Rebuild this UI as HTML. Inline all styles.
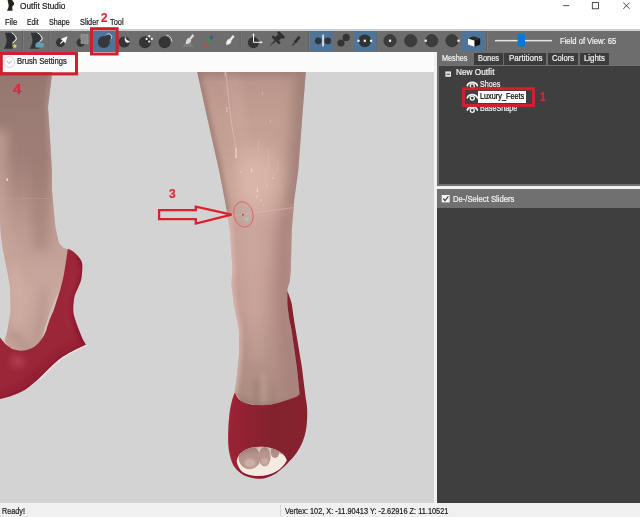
<!DOCTYPE html>
<html><head><meta charset="utf-8"><title>Outfit Studio</title>
<style>
html,body{margin:0;padding:0;}
body{width:640px;height:517px;overflow:hidden;background:#fff;position:relative;font-family:"Liberation Sans","DejaVu Sans",sans-serif;font-size:9px;color:#1c1c1c;}
.a{position:absolute;}
.t{position:absolute;white-space:nowrap;transform-origin:0 0;color:#1c1c1c;-webkit-text-stroke:0.22px currentColor;}
.t.w{color:#f2f2f2;}
.t.k{color:#000;}
.t.red{color:#e0283a;font-weight:bold;}
#toolbar{left:0;top:30.5px;width:640px;height:21.2px;background:#6d6d6d;}
#vp{left:0;top:52px;width:434px;height:451px;background:#d3d3d3;overflow:hidden;}
#brush{left:0;top:52px;width:437px;height:20px;background:#fbfbfb;}
#rp{left:437px;top:52px;width:203px;height:451px;background:#6d6d6d;}
.tab{top:52.5px;height:12.5px;background:#3c3c3c;}
#tree{left:437px;top:65px;width:203px;height:121px;background:#3f3f3f;border:2px solid #717171;box-sizing:border-box;border-right:none;border-top-width:1.5px;}
#split{left:434px;top:186px;width:206px;height:3px;background:#f2f2f2;}
#vsplit{left:434px;top:52px;width:3px;height:451px;background:#f2f2f2;}
#shdr{left:437px;top:188.8px;width:203px;height:19.5px;background:#707070;}
#sbody{left:437px;top:208.3px;width:203px;height:294.5px;background:#3f3f3f;}
#status{left:0;top:502.8px;width:640px;height:14.2px;background:#f0f0f0;}
svg{position:absolute;left:0;top:0;}
#all{position:absolute;left:0;top:0;width:640px;height:517px;overflow:hidden;filter:blur(0.35px);}
</style></head><body>
<div class="a" style="left:0;top:30.5px;width:640px;height:21.2px;background:#6d6d6d;"></div>
<div class="a" style="left:0;top:72px;width:434px;height:431px;background:#d3d3d3;"></div>
<div class="a" style="left:437px;top:52px;width:203px;height:451px;background:#6d6d6d;"></div>
<div class="a" style="left:439px;top:66.5px;width:201px;height:117.5px;background:#3f3f3f;"></div>
<div class="a" style="left:437px;top:186px;width:203px;height:3px;background:#f2f2f2;"></div>
<div class="a" style="left:437px;top:188.8px;width:203px;height:19.5px;background:#707070;"></div>
<div class="a" style="left:437px;top:208.3px;width:203px;height:294.5px;background:#3f3f3f;"></div>
<div class="a" style="left:0;top:502.8px;width:640px;height:14.2px;background:#f0f0f0;"></div>
<div id="all">
<div class="a" style="left:0;top:28.9px;width:640px;height:2px;background:#cdcdcd;"></div>
<div class="a" id="toolbar"></div>
<div class="a" id="vp"></div>
<svg width="640" height="517" viewBox="0 0 640 517">
<defs>
<clipPath id="vpclip"><rect x="0" y="72" width="434" height="430.8"/></clipPath>
<filter id="b2" filterUnits="userSpaceOnUse" x="-20" y="40" width="680" height="500"><feGaussianBlur stdDeviation="2"/></filter>
<filter id="b4" filterUnits="userSpaceOnUse" x="-20" y="40" width="680" height="500"><feGaussianBlur stdDeviation="4"/></filter>
<filter id="b6" filterUnits="userSpaceOnUse" x="-20" y="40" width="680" height="500"><feGaussianBlur stdDeviation="6"/></filter>
<filter id="b10" filterUnits="userSpaceOnUse" x="-20" y="40" width="680" height="500"><feGaussianBlur stdDeviation="10"/></filter>
<filter id="b1" filterUnits="userSpaceOnUse" x="-20" y="40" width="680" height="500"><feGaussianBlur stdDeviation="0.8"/></filter>
<filter id="soft" x="-5%" y="-5%" width="110%" height="110%"><feGaussianBlur stdDeviation="0.45"/></filter>
<path id="legC" d="M197.2 72 L305.8 72 L302 120 L298.3 170 L294.2 200 L291.8 230 L290.8 270 L289.8 281.6 L287.4 289.3 L287.3 304 L289 318 L291.5 330 L296.9 368 L300 396 L280 403 L260 406 L242 402 L234.5 393 L236.5 380 L239 355 L239 330 L234 305 L231.5 285 L232.4 268 L229.9 230 L224.8 200 L219 170 L207.7 120 Z"/>
<path id="legL" d="M-5 72 L52.3 72 L48 107 L49.4 128 L51.9 170 L51.9 189 L53.5 208 L55.5 228 L59 243 L63 247.5 L67.7 249.5 L66 268 L60 290 L53 313 L47 333 L42 342 L30 352 L12 351 L4.5 341 L7 332 L10.5 312 L10 287 L6.6 268 L3 250 L1 237 L0 220 L-5 215 Z"/>
<path id="shoeL" d="M67.7 248.7 C72 250 75 252.5 77.4 255.5 C80.5 259 82.5 262 82.3 266 C82.3 270 82 274 81.3 278.7 C79.5 286 76 291 74.5 296 C73 303 72.8 311 73.8 315 C75 320 78 328 83 340 L86.1 345 C76 349.5 68 353 60 359 C50 367 38 381 25 389.7 C17 394.4 8 397.4 -5 400 L-5 335 L0 337.4 C3 341 8 347.5 14 349.5 C20 351.8 28 350.5 34 347 C40 343 44 336 46.4 330 C48 324 50.5 317 53.2 311.6 C56 303 58.5 295 60.5 288.4 C62.5 281 64 275 64.8 269 C66 262 67 255 67.7 248.7 Z"/>
<path id="shoeC" d="M234.8 392.8 C237 398 240 401 244 402.5 C250 404.6 256 405.4 262 405.2 C268 405 274 404 280 402.4 C287 400.4 293 398.4 297.5 396.3 L299.6 394 L296.9 368 L291.5 330 L289 318 L287.3 304 L287.3 291 C289.5 296 291 301 291.8 304 L294 320 L295.7 330 L302 368 L305.7 398 C307 404 307.4 410 307.2 416 C307 424 306.4 430 304.6 436 C302 445 297 454 289.4 461.3 C284 467 280 470.6 276.6 472.9 C271 476.4 266 478.4 260.4 478.7 C254 478.6 249 477.4 244 475.2 C239.6 472.6 236.2 469.6 233.7 466 C231.6 461.6 230 456.8 229.2 452 C228.2 446 228 440 228.2 433.4 C228.4 425 229 417 230 410 C231.2 403 232.8 397 234.8 392.8 Z"/>
<clipPath id="cLegC"><use href="#legC"/></clipPath>
<clipPath id="cLegL"><use href="#legL"/></clipPath>
<clipPath id="cShoeL"><use href="#shoeL"/></clipPath>
<clipPath id="cShoeC"><use href="#shoeC"/></clipPath>
<linearGradient id="gLegC" x1="0" y1="0" x2="0" y2="1">
<stop offset="0" stop-color="#a5837a"/><stop offset="0.03" stop-color="#bb968c"/><stop offset="0.144" stop-color="#c39e92"/><stop offset="0.38" stop-color="#c6a195"/><stop offset="0.43" stop-color="#c8a299"/><stop offset="0.56" stop-color="#c7a298"/><stop offset="0.71" stop-color="#c39d93"/><stop offset="0.83" stop-color="#b6948a"/><stop offset="1" stop-color="#ab8a80"/>
</linearGradient>
<linearGradient id="gShoeC" gradientUnits="userSpaceOnUse" x1="227" y1="0" x2="307" y2="0">
<stop offset="0" stop-color="#9c2334"/><stop offset="0.3" stop-color="#8e2131"/><stop offset="0.55" stop-color="#83202e"/><stop offset="1" stop-color="#86222f"/>
</linearGradient>
<linearGradient id="gLegL" x1="0" y1="0" x2="0" y2="1">
<stop offset="0" stop-color="#94776f"/><stop offset="0.3" stop-color="#9f7f77"/><stop offset="0.44" stop-color="#ae8c84"/><stop offset="0.47" stop-color="#b4928a"/><stop offset="0.6" stop-color="#c19e95"/><stop offset="0.78" stop-color="#cba89e"/><stop offset="1" stop-color="#c6a298"/>
</linearGradient>
</defs>
<g clip-path="url(#vpclip)">
<g filter="url(#soft)">
<!-- left leg -->
<use href="#legL" fill="url(#gLegL)"/>
<g clip-path="url(#cLegL)">
 <path d="M52.3 72 L48 107 L49.4 128 L51.9 170 L51.9 189 L53.5 208 L55.5 228 L59 243 L63 247.5 L67.7 249.5" fill="none" stroke="#c5a59b" stroke-width="5" filter="url(#b2)" opacity="0.5"/>
 <path d="M-2 130 L-2 215 L1 237 L6 262" fill="none" stroke="#c7a69c" stroke-width="18" filter="url(#b6)" opacity="0.75"/>
 <path d="M14 262 L20 300 L16 330" fill="none" stroke="#d4b1a6" stroke-width="10" filter="url(#b4)" opacity="0.6"/>
 <path d="M38 150 L39 200 L41 250" fill="none" stroke="#9b7a72" stroke-width="14" filter="url(#b6)" opacity="0.6"/>
 <path d="M44 285 L41 315 L36 345" fill="none" stroke="#a38a82" stroke-width="6" filter="url(#b4)" opacity="0.6"/>
 <path d="M10 330 L30 352" fill="none" stroke="#a08880" stroke-width="8" filter="url(#b4)" opacity="0.5"/>
 <path d="M0 199 L52 198.5" stroke="#c7a79d" stroke-width="0.8" opacity="0.45"/>
</g>
<!-- inside of left shoe -->
<path d="M60.5 289 L57.5 302 L53.5 314 L50 322.3 L46.4 332 L43 340 L40.5 342 L43 334 L46 324 L50 312 L55 299 Z" fill="#cfc2bc"/>
<path d="M60.5 289 L57.5 302 L53.5 314 L50 322.3 L46.4 332 L43 340" fill="none" stroke="#e4d2cc" stroke-width="0.9"/>
<!-- left shoe -->
<use href="#shoeL" fill="#9b2638"/>
<g clip-path="url(#cShoeL)">
 <ellipse cx="17.5" cy="361.5" rx="7" ry="5" fill="#c4526a" filter="url(#b4)" opacity="0.75"/>
 <path d="M77.4 255.5 C83 262 82.5 272 81.3 278.7 C79 288 74 296 73.5 305 C73 317 78 328 83 340 L86.1 345" fill="none" stroke="#84142a" stroke-width="5" filter="url(#b2)" opacity="0.8"/>
 <path d="M72 256 C77 264 76 276 72 288 C68 300 66 312 68 330" fill="none" stroke="#b03a4c" stroke-width="4" filter="url(#b4)" opacity="0.5"/>
 <path d="M86.1 345 C76 349.5 68 353 60 359 C50 367 38 381 25 389.7 C17 394.4 8 397.4 -5 400" fill="none" stroke="#85142a" stroke-width="7" filter="url(#b4)" opacity="0.7"/>
</g>
<path d="M86.3 345.3 C76 350 68 353.6 60.2 359.6 C52 366 46 373 40 379" fill="none" stroke="#f3e2e0" stroke-width="1.5" stroke-linecap="round"/>
<!-- centre leg -->
<use href="#legC" fill="url(#gLegC)"/>
<g clip-path="url(#cLegC)">
 <path d="M197.2 72 L207.7 120 L219 170 L224.8 200 L227 212" fill="none" stroke="#8f716b" stroke-width="7" filter="url(#b2)" opacity="0.6"/>
 <path d="M229 214 L229.9 230 L232.4 268 L231.5 285 L234 305 L239 330 L239 355 L236.5 380 L234.5 393" fill="none" stroke="#e0c0b8" stroke-width="5" filter="url(#b2)" opacity="0.7"/>
 <path d="M305.8 72 L302 120 L298.3 170 L294.2 200 L293 209" fill="none" stroke="#9a7b73" stroke-width="20" filter="url(#b6)" opacity="0.8"/>
 <path d="M290 209 L286 230 L284.3 268 L283 290 L286 330 L291 368 L294 396" fill="none" stroke="#a57d79" stroke-width="20" filter="url(#b6)" opacity="0.75"/>
 <path d="M232 72 L240 130 L248 190 L252 240 L254 300 L258 360" fill="none" stroke="#dcbdb3" stroke-width="10" filter="url(#b6)" opacity="0.3"/>
 <ellipse cx="257" cy="180" rx="22" ry="34" fill="#dfbcae" filter="url(#b10)" opacity="0.75"/>
 <path d="M230 216 C250 213.5 275 210 293.5 207.6" fill="none" stroke="#e2c4b9" stroke-width="0.9" opacity="0.5"/>
 <path d="M257 380 L255.4 404" fill="none" stroke="#987870" stroke-width="3" filter="url(#b2)" opacity="0.6"/>
 <path d="M273 384 L274 404" fill="none" stroke="#987870" stroke-width="3" filter="url(#b2)" opacity="0.5"/>
 <path d="M263 372 L264 404" fill="none" stroke="#c9a89d" stroke-width="3" filter="url(#b2)" opacity="0.6"/>
 <path d="M240 398 C252 408 275 408 298 398" fill="none" stroke="#8e6e68" stroke-width="4" filter="url(#b2)" opacity="0.5"/>
</g>
<!-- centre shoe -->
<use href="#shoeC" fill="url(#gShoeC)"/>
<g clip-path="url(#cShoeC)">
 
 
 <path d="M234.8 392.8 C230 403 227 417 226.7 433.4 C226.5 446 228 458 233.7 466 C240 475 250 478.6 260.4 478.7" fill="none" stroke="#b03244" stroke-width="3" filter="url(#b2)" opacity="0.6"/>
 <path d="M236 470 C246 480 270 482 290 462" fill="none" stroke="#85172a" stroke-width="4" filter="url(#b2)" opacity="0.6"/>
</g>
<!-- peep toe -->
<clipPath id="cPeep"><path id="peep" d="M236.6 461 C237.4 457 239 454.6 241.6 452.6 C245 449.6 249 448 253.4 447.3 C259 446.4 265 446.6 269.7 447.8 C274 448.8 278 450.6 281.6 453 C284.4 455.2 286.2 457.8 286.8 460.4 C284.4 465 281 468.4 277 471 C271.4 474.4 265.4 476 258.4 476.1 C252 476 246.8 474.8 242.4 472 C239.4 469 237.4 465.4 236.6 461 Z"/></clipPath>
<use href="#peep" fill="#f3eae1"/>
<g clip-path="url(#cPeep)">
<ellipse cx="249.6" cy="457.6" rx="11" ry="11.6" fill="#b6938c"/>
<ellipse cx="264.6" cy="456.6" rx="6" ry="9.6" fill="#b8958e"/>
<ellipse cx="275" cy="452" rx="4.4" ry="6" fill="#b3908a"/>
<ellipse cx="282" cy="450" rx="3" ry="4" fill="#a88680"/>
<ellipse cx="250" cy="463" rx="6" ry="4.4" fill="#cdaea8" filter="url(#b1)"/>
<ellipse cx="264.8" cy="461.4" rx="3.6" ry="3.4" fill="#cdaea8" filter="url(#b1)"/>
<path d="M236 446 L288 446 L288 452 C270 447.5 252 447.5 236 456 Z" fill="#8f6c68" filter="url(#b2)" opacity="0.7"/>
</g>
</g>
<!-- wet speculars -->
<g fill="#f0d8ce" opacity="0.9" filter="url(#soft)">
<rect x="235.3" y="147.5" width="1.4" height="10.5" rx="0.6"/>
<path d="M226 72 L228.6 100 L231.8 125 L235.6 147" fill="none" stroke="#f0d8ce" stroke-width="0.9" opacity="0.5"/>
<rect x="251.1" y="168.5" width="1.1" height="3.8"/>
<rect x="256.8" y="188.5" width="1.2" height="3.6"/>
<rect x="256.4" y="195.6" width="1.1" height="2"/>
<rect x="260.6" y="199.4" width="1" height="1.6"/>
<rect x="266.6" y="184.4" width="0.9" height="2" opacity="0.7"/>
<rect x="272.2" y="177" width="0.9" height="2" opacity="0.7"/>
<rect x="240.6" y="171" width="0.9" height="2" opacity="0.6"/>
<rect x="263" y="204" width="0.9" height="1.6" opacity="0.7"/>
<rect x="226.4" y="107" width="1" height="5" opacity="0.7"/>
<rect x="224.6" y="72" width="1" height="4.5" opacity="0.7"/>
<rect x="262" y="92" width="0.8" height="3" opacity="0.5"/>
<rect x="270" y="120" width="0.8" height="3" opacity="0.5"/>
<rect x="258" y="140" width="0.8" height="14" opacity="0.3"/>
<rect x="268" y="150" width="0.8" height="16" opacity="0.3"/>
<rect x="277" y="160" width="0.8" height="12" opacity="0.3"/>
<ellipse cx="7.2" cy="179.6" rx="0.9" ry="1.6"/>
</g>
<!-- brush cursor -->
<ellipse cx="243.4" cy="214.4" rx="9.6" ry="12.9" fill="#8fa79f" fill-opacity="0.13" stroke="#e6505c" stroke-width="0.75" transform="rotate(-14 243.4 214.4)"/>
<rect x="244.8" y="217.2" width="3.8" height="4" rx="1" fill="#a6cbc6" opacity="0.8" filter="url(#soft)"/>
<circle cx="242.9" cy="214.7" r="0.9" fill="#e02030"/>
<!-- arrow -->
<path d="M159.1 210.2 L195.8 210.2 L195.8 206.6 L231.6 214.7 L195.8 223.6 L195.8 219.2 L159.1 219.2 Z" fill="none" stroke="#dc2030" stroke-width="2.3" stroke-linejoin="miter"/>
</g>
</svg>

<div class="a" id="brush"></div>
<div class="a" id="vsplit"></div>
<div class="a" id="rp"></div>
<div class="a tab" style="left:437px;width:37px;background:#6d6d6d;"></div>
<div class="a tab" style="left:474px;width:29px;"></div>
<div class="a tab" style="left:504.3px;width:41.7px;"></div>
<div class="a tab" style="left:547.7px;width:30.6px;"></div>
<div class="a tab" style="left:580px;width:28.7px;"></div>
<div class="a" id="tree"></div>
<div class="a" style="left:478px;top:91px;width:48px;height:12px;background:#fff;"></div>
<div class="a" id="split"></div>
<div class="a" id="shdr"></div>
<div class="a" id="sbody"></div>
<div class="a" id="status"></div>
<div class="a" style="left:280.3px;top:504.5px;width:0.8px;height:11px;background:#d6d6d6;"></div>
<svg width="640" height="517" viewBox="0 0 640 517">
<defs>
<path id="torso" d="M5.1 32.7 L11.7 32.7 C13.5 34 15.2 36 15.2 38.2 C15.2 40.2 12.2 41 11.8 42.8 C11.6 44.5 12.6 46.8 12.9 48.7 L3.9 48.7 C5.2 46.5 6.6 43.5 6.6 40.5 C6.6 37.5 5.4 35.2 5.1 32.7 Z"/>
<path id="torsoline" d="M11.9 32.9 C14 34.3 16.5 36.6 16.4 38.8 C16.3 40.6 13.8 41.3 13.2 42.8" fill="none" stroke="#f4f4f4" stroke-width="1" stroke-linecap="round"/>
<radialGradient id="ball" cx="0.45" cy="0.45" r="0.6"><stop offset="0" stop-color="#3f3f3f"/><stop offset="1" stop-color="#333"/></radialGradient>
</defs>
<!-- toolbar separators -->
<g stroke="#575757" stroke-width="0.8">
<path d="M22.8 31.5V51M49.2 31.5V51M240.4 31.5V51M308.6 31.5V51M377.3 31.5V51M486.7 31.5V51"/>
</g>
<g stroke="#868686" stroke-width="0.6">
<path d="M23.5 31.5V51M49.9 31.5V51M241.1 31.5V51M309.3 31.5V51M378 31.5V51M487.4 31.5V51"/>
</g>
<!-- selected backgrounds -->
<g fill="#4f7499">
<rect x="93.4" y="30.7" width="21.6" height="20.8"/>
<rect x="310.2" y="31" width="22.6" height="20.3"/>
<rect x="354" y="31" width="22.5" height="20.3"/>
<rect x="461.4" y="31" width="23.4" height="20.3"/>
</g>
<!-- icon 1 new project -->
<use href="#torso" fill="#2f2f33"/>
<use href="#torsoline"/>
<path d="M14.8 43.4 L15.5 45.2 L17.4 45.3 L15.9 46.5 L16.4 48.4 L14.8 47.3 L13.2 48.4 L13.7 46.5 L12.2 45.3 L14.1 45.2 Z" fill="#e8d060"/>
<!-- icon 2 load project -->
<g transform="translate(25.8 0)">
<use href="#torso" fill="#2c3438"/>
<use href="#torsoline"/>
<path d="M9.7 43.8 L12 42.2 L14 42.2 L14.6 43 L17.9 43 L17.9 47.6 L9.7 47.6 Z" fill="#62a0ba"/>
</g>
<!-- icon 3 select -->
<circle cx="60.4" cy="42.6" r="4.5" fill="#343434"/>
<path d="M67.6 36.2 L65.3 43.6 L63.6 41.4 L60.6 44 L60 43.3 L62.7 40.5 L60.4 39 Z" fill="#f6f6f6"/>
<!-- icon 4 mask -->
<circle cx="80.7" cy="42.6" r="4.2" fill="#343434"/>
<rect x="80.9" y="34.6" width="7.2" height="9" fill="#8a8a8a" stroke="#b8b8b8" stroke-width="0.7" stroke-dasharray="1 0.8"/>
<!-- icon 5 inflate (selected) -->
<circle cx="103.8" cy="42" r="6" fill="#36383c"/>
<circle cx="108.4" cy="37.1" r="2.7" fill="#36383c"/>
<path d="M106.6 34.6 A3.2 3.2 0 0 1 111.4 38.6" fill="none" stroke="#f0f0f0" stroke-width="0.8"/>
<!-- icon 6 deflate -->
<circle cx="124.2" cy="42" r="5.6" fill="#343434"/>
<path d="M125.2 36.2 C125.6 39.2 127.3 40.8 130 41 C129.3 42.3 128 43.2 126.5 42.6 C124.6 41.6 124.2 38.6 125.2 36.2 Z" fill="#f2f2f2"/>
<!-- icon 7 move -->
<circle cx="145" cy="42.3" r="6" fill="#343434"/>
<g fill="#f4f4f4"><circle cx="149.2" cy="36.2" r="1.1"/><circle cx="146.6" cy="38.9" r="1.1"/><circle cx="151.9" cy="38.9" r="1.1"/><circle cx="149.2" cy="41.6" r="1.1"/></g>
<!-- icon 8 smooth -->
<circle cx="164.6" cy="42.3" r="6" fill="#343434"/>
<path d="M166.5 35 A7.2 7.2 0 0 1 171.9 41.5" fill="none" stroke="#f0f0f0" stroke-width="0.8"/>
<!-- icon 9 weight brush -->
<path d="M182.3 47 L185 42.5 L191 42.5 L193.6 47 Z" fill="#7b7b7b"/>
<g id="brushshape" fill="#dadada"><path d="M192.6 34.1 L194.3 35.7 L190.7 40 L189 38.4 Z"/><path d="M188.7 37.8 L191.2 40.2 C190.8 42.8 188.8 44.2 185.8 43.9 C185.6 41.3 186.6 38.8 188.7 37.8 Z"/></g>
<!-- icon 10 color brush -->
<path d="M211.5 35 L213.6 37.5 L211 40 L209.5 37.6 Z" fill="#2f5f86"/>
<path d="M209.6 38.5 L211.4 40.5 L208.4 43.6 L205.6 42.6 Z" fill="#3f8f55"/>
<path d="M205.4 42.8 L208.6 43.8 L206.6 46.6 L203.6 46 Z" fill="#c24a44"/>
<!-- icon 11 alpha brush -->
<g transform="translate(40.3 0.9)" fill="#f0f0f0"><path d="M192.6 34.1 L194.3 35.7 L190.7 40 L189 38.4 Z"/><path d="M188.7 37.8 L191.2 40.2 C190.8 42.8 188.8 44.2 185.8 43.9 C185.6 41.3 186.6 38.8 188.7 37.8 Z"/></g>
<!-- icon 12 transform -->
<circle cx="253.4" cy="42.6" r="5.6" fill="#343434"/>
<path d="M253.5 34 V42.3 H261.6" fill="none" stroke="#f6f6f6" stroke-width="1"/>
<path d="M252.1 35.3 L253.5 33.2 L254.9 35.3 Z M260.6 40.9 L262.7 42.3 L260.6 43.7 Z" fill="#f6f6f6"/>
<!-- icon 13 pin -->
<g transform="translate(276.2 39.8) rotate(45)" fill="#2f2f2f">
<rect x="-4.4" y="-8.2" width="8.8" height="2.8" rx="0.8"/><rect x="-2.6" y="-5.6" width="5.2" height="4.8"/><rect x="-5.4" y="-1.2" width="10.8" height="2.6" rx="0.8"/><path d="M-0.9 1.2 L0.9 1.2 L0 10 Z"/>
</g>
<!-- icon 14 pencil -->
<path d="M298.6 35.8 L300.6 37.5 L295.6 43.8 L293.6 42.1 Z M293.2 42.8 L294.9 44.3 L292 46.2 Z" fill="#2e2e2e"/>
<!-- icon 15 x-mirror -->
<circle cx="318.3" cy="40.8" r="3.4" fill="#30353c"/><circle cx="327.8" cy="40.8" r="3.4" fill="#30353c"/>
<rect x="322.3" y="34.6" width="1.5" height="11.8" fill="#f4f4f4"/>
<!-- icon 16 connected -->
<circle cx="341" cy="43" r="3.6" fill="#343434"/><circle cx="346.2" cy="37.4" r="3.6" fill="#343434"/>
<!-- icon 17 global -->
<circle cx="364.8" cy="40.8" r="6.4" fill="#2f3338"/>
<g fill="#fafafa"><rect x="357.4" y="39.7" width="2.2" height="2.2"/><rect x="363.7" y="39.7" width="2.2" height="2.2"/><rect x="370" y="39.7" width="2.2" height="2.2"/></g>
<!-- icons 18-21 -->
<g fill="#3c3c3c" stroke="#333" stroke-width="0.8">
<circle cx="390" cy="40.7" r="6.1"/><circle cx="410.7" cy="40.7" r="6.1"/><circle cx="431.7" cy="40.7" r="6.1"/><circle cx="452" cy="40.7" r="6.1"/>
</g>
<g fill="#fafafa"><rect x="388.9" y="39.6" width="2.2" height="2.2"/><rect x="424.6" y="39.6" width="2.2" height="2.2"/><rect x="457.4" y="39.6" width="2.2" height="2.2"/></g>
<!-- icon 22 cube -->
<path d="M468 38.4 L474.6 40.6 L474.6 46.8 L468 44.4 Z" fill="#fafafa"/>
<path d="M474.6 40.6 L480.2 38.4 L480.2 44.4 L474.6 46.8 Z" fill="#141414"/>
<path d="M468 38.4 L473.6 36.2 L480.2 38.4 L474.6 40.6 Z" fill="#2c2c2c"/>
<!-- slider -->
<rect x="495" y="39.9" width="57" height="1.5" fill="#e6e6e6"/>
<rect x="517.6" y="33.8" width="7.4" height="12.6" rx="1.5" fill="#0a78d6"/>
<!-- window controls -->
<g stroke="#222" stroke-width="0.8" fill="none">
<path d="M563.2 5.6H569.2"/>
<rect x="592.3" y="2.6" width="6.2" height="6.2"/>
<path d="M623.3 2.6L629.7 8.8M629.7 2.6L623.3 8.8"/>
</g>
<!-- app icon -->
<path d="M7.6 0 L12.2 0 C12.6 1.2 14.2 2.4 14.2 3.8 C14.2 5.2 12.6 5.6 12.3 6.8 C12.1 8 12.4 9.4 12.6 10.7 L7 10.7 C7.8 9.2 8.6 7.6 8.6 5.8 C8.6 3.6 7.8 2 7.6 0 Z" fill="#26221e"/>
<!-- brush settings chevron -->
<circle cx="9.2" cy="62" r="5.4" fill="#fff" stroke="#c4c8d0" stroke-width="0.8"/>
<path d="M6.6 60.8 L9.2 63.6 L11.8 60.8" fill="none" stroke="#9aa0aa" stroke-width="0.9"/>
<!-- tree icons -->
<rect x="445.4" y="71.4" width="5.6" height="5.4" fill="#e4e4e4"/>
<rect x="446.5" y="73.7" width="3.4" height="1" fill="#444"/>
<g id="eye1">
<path d="M467.3 85.6 C468.8 81.4 475.8 81.4 477.4 85.6" fill="none" stroke="#f4f4f4" stroke-width="1.7" stroke-linecap="round"/>
<circle cx="472.3" cy="85.9" r="2" fill="#3f3f3f" stroke="#f4f4f4" stroke-width="1.3"/>
</g>
<use href="#eye1" y="12.2"/>
<use href="#eye1" y="24.4"/>
<!-- checkbox -->
<rect x="441.7" y="195" width="8" height="7.4" fill="#f6f6f6"/>
<path d="M443.2 198.6 L445 200.6 L448.4 196.4" fill="none" stroke="#333" stroke-width="1.1"/>
</svg>

<div class="t " style="left:19.7px;top:2.12px;font-size:8.8px;line-height:8.8px;transform:scaleX(0.936);">Outfit Studio</div>
<div class="t " style="left:4.9px;top:18.42px;font-size:8.8px;line-height:8.8px;transform:scaleX(0.860);">File</div>
<div class="t " style="left:27.0px;top:18.42px;font-size:8.8px;line-height:8.8px;transform:scaleX(0.765);">Edit</div>
<div class="t " style="left:49.4px;top:18.42px;font-size:8.8px;line-height:8.8px;transform:scaleX(0.810);">Shape</div>
<div class="t " style="left:80.3px;top:18.42px;font-size:8.8px;line-height:8.8px;transform:scaleX(0.831);">Slider</div>
<div class="t " style="left:109.8px;top:18.42px;font-size:8.8px;line-height:8.8px;transform:scaleX(0.843);">Tool</div>
<div class="t " style="left:16.9px;top:57.25px;font-size:9px;line-height:9px;transform:scaleX(0.853);">Brush Settings</div>
<div class="t w" style="left:442.2px;top:54.15px;font-size:9px;line-height:9px;transform:scaleX(0.809);">Meshes</div>
<div class="t w" style="left:478.0px;top:54.15px;font-size:9px;line-height:9px;transform:scaleX(0.823);">Bones</div>
<div class="t w" style="left:508.8px;top:54.15px;font-size:9px;line-height:9px;transform:scaleX(0.890);">Partitions</div>
<div class="t w" style="left:552.0px;top:54.15px;font-size:9px;line-height:9px;transform:scaleX(0.853);">Colors</div>
<div class="t w" style="left:584.0px;top:54.15px;font-size:9px;line-height:9px;transform:scaleX(0.874);">Lights</div>
<div class="t w" style="left:455.7px;top:68.35px;font-size:9px;line-height:9px;transform:scaleX(0.916);">New Outfit</div>
<div class="t w" style="left:479.5px;top:79.65px;font-size:9px;line-height:9px;transform:scaleX(0.795);">Shoes</div>
<div class="t k" style="left:480.0px;top:91.85px;font-size:9px;line-height:9px;transform:scaleX(0.811);">Luxury_Feets</div>
<div class="t w" style="left:479.5px;top:104.05px;font-size:9px;line-height:9px;transform:scaleX(0.799);">BaseShape</div>
<div class="t w" style="left:452.6px;top:194.62px;font-size:8.8px;line-height:8.8px;transform:scaleX(0.871);">De-/Select Sliders</div>
<div class="t w" style="left:559.5px;top:36.85px;font-size:9px;line-height:9px;transform:scaleX(0.847);">Field of View: 65</div>
<div class="t " style="left:1.7px;top:506.79px;font-size:8.6px;line-height:8.6px;transform:scaleX(0.841);">Ready!</div>
<div class="t " style="left:284.8px;top:506.79px;font-size:8.6px;line-height:8.6px;transform:scaleX(0.857);">Vertex: 102, X: -11.90413 Y: -2.62916 Z: 11.10521</div>
<div class="t red" style="left:101.2px;top:11.54px;font-size:12.9px;line-height:12.9px;transform:scaleX(0.906);">2</div>
<div class="t red" style="left:13.4px;top:81.80px;font-size:14px;line-height:14px;transform:scaleX(1.077);">4</div>
<div class="t red" style="left:168.6px;top:187.84px;font-size:12.9px;line-height:12.9px;transform:scaleX(0.934);">3</div>
<div class="t red" style="left:540.0px;top:91.13px;font-size:12.2px;line-height:12.2px;transform:scaleX(0.855);">1</div>
<svg width="640" height="517" viewBox="0 0 640 517">
<!-- red annotation boxes -->
<g fill="none" stroke="#d21f2f">
<rect x="91.5" y="28.7" width="25.6" height="25.3" stroke-width="3"/>
<rect x="1.3" y="53.5" width="75.2" height="20.4" stroke-width="3"/>
<rect x="463.6" y="88.7" width="69.9" height="16.8" stroke-width="3"/>
</g>
</svg>

</div></body></html>
